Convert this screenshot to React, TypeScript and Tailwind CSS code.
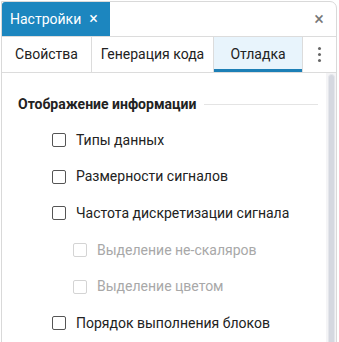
import { useState } from "react";

type Option = { label: string; indent?: boolean; disabled?: boolean };

const options: Option[] = [
  { label: "Типы данных" },
  { label: "Размерности сигналов" },
  { label: "Частота дискретизации сигнала" },
  { label: "Выделение не-скаляров", indent: true, disabled: true },
  { label: "Выделение цветом", indent: true, disabled: true },
  { label: "Порядок выполнения блоков" },
];

const tabs = ["Свойства", "Генерация кода", "Отладка"];

export default function App() {
  const [active, setActive] = useState(2);

  return (
    <div className="w-[339px] h-[342px] bg-white p-px overflow-hidden" style={{ fontFamily: "Roboto, 'Noto Sans', sans-serif" }}>
      <div className="w-[336px] h-[345px] border border-[#d9d9d9] rounded-tr-[7px] flex flex-col overflow-hidden">
        {/* Header */}
        <div className="h-[35px] flex items-stretch border-b border-[#dcdcdc] shrink-0">
          <div className="w-[108px] bg-[#1c86bf] rounded-tl-[3px] flex items-center pl-[8px] gap-[8px] text-white text-[14px]">
            <span>Настройки</span>
            <span className="text-[16px] leading-none">×</span>
          </div>
          <div className="flex-1" />
          <button className="w-[34px] flex items-center justify-center text-[#777] text-[18px] leading-none">×</button>
        </div>

        {/* Tabs */}
        <div className="h-[36px] flex border-b border-[#dcdcdc] shrink-0">
          {tabs.map((t, i) => (
            <button
              key={t}
              onClick={() => setActive(i)}
              className={`relative flex items-center justify-center text-[14px] text-[#222] border-r border-[#dcdcdc] ${
                i === 0 ? "w-[90px]" : i === 1 ? "w-[122px]" : "w-[89px]"
              } ${active === i ? "bg-[#e8f4fc]" : ""}`}
            >
              {t}
              {active === i && <span className="absolute left-0 right-0 bottom-0 h-[3px] bg-[#1c7fb6]" />}
            </button>
          ))}
          <button className="flex-1 flex flex-col items-center justify-center gap-[3px]">
            <span className="w-[3px] h-[3px] rounded-full bg-[#666]" />
            <span className="w-[3px] h-[3px] rounded-full bg-[#666]" />
            <span className="w-[3px] h-[3px] rounded-full bg-[#666]" />
          </button>
        </div>

        {/* Content */}
        <div className="flex-1 flex min-h-0">
          <div className="flex-1 pl-[16px] pr-[8px]">
            <div className="flex items-center gap-[8px] pt-[17px] h-[46px]">
              <span className="text-[14px] font-bold text-[#222] whitespace-nowrap">Отображение информации</span>
              <span className="flex-1 h-px bg-[#e4e4e4]" />
            </div>
            <div className="pt-[3px]">
              {options.map((o) => (
                <label
                  key={o.label}
                  className={`h-[36.6px] flex items-center gap-[10px] ${o.indent ? "pl-[55px]" : "pl-[34px]"}`}
                >
                  <span
                    className={`w-[14px] h-[14px] rounded-[2px] border bg-white shrink-0 ${
                      o.disabled ? "border-[#d4d4d4]" : "border-[#555]"
                    }`}
                  />
                  <span className={`text-[14px] whitespace-nowrap ${o.disabled ? "text-[#a8a8a8]" : "text-[#222]"}`}>
                    {o.label}
                  </span>
                </label>
              ))}
            </div>
          </div>
          <div className="w-[10px] bg-[#f4f4f6] flex justify-center pt-px">
            <div className="w-[7px] h-[300px] rounded-t-[4px] bg-[#d5d8e0] border border-[#e4e6eb]" />
          </div>
        </div>
      </div>
    </div>
  );
}
